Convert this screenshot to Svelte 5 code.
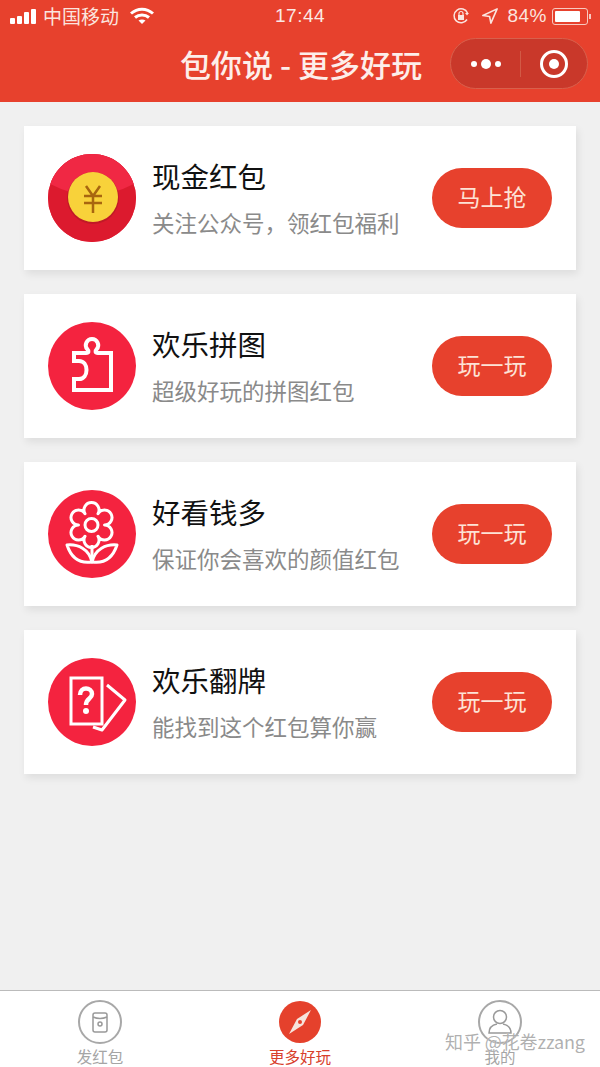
<script>
	const cards = [
		{ id: 'cash', title: '现金红包', sub: '关注公众号\uFF0C领红包福利', btn: '马上抢' },
		{ id: 'puzzle', title: '欢乐拼图', sub: '超级好玩的拼图红包', btn: '玩一玩' },
		{ id: 'flower', title: '好看钱多', sub: '保证你会喜欢的颜值红包', btn: '玩一玩' },
		{ id: 'cards', title: '欢乐翻牌', sub: '能找到这个红包算你赢', btn: '玩一玩' }
	];

	// scalloped outline of the flower, one arc per petal
	function flowerPath(cx, cy, r, lobe) {
		let d = '';
		for (let i = 0; i < 6; i++) {
			const a = ((i * 60 - 60) * Math.PI) / 180;
			const x = (cx + r * Math.cos(a)).toFixed(1);
			const y = (cy + r * Math.sin(a)).toFixed(1);
			d += i === 0 ? `M${x} ${y}` : `A${lobe} ${lobe} 0 1 1 ${x} ${y}`;
		}
		const a0 = (-60 * Math.PI) / 180;
		d += `A${lobe} ${lobe} 0 1 1 ${(cx + r * Math.cos(a0)).toFixed(1)} ${(cy + r * Math.sin(a0)).toFixed(1)}Z`;
		return d;
	}
</script>

<div class="page">
	<header class="head">
		<div class="status">
			<div class="status-left">
				<span class="signal"><i></i><i></i><i></i><i></i></span>
				<span class="carrier">中国移动</span>
				<svg class="wifi" viewBox="0 0 24 18" width="24" height="18">
					<path d="M1 6.500C7.500 .7 16.500 .7 23 6.500" fill="none" stroke="#fff" stroke-width="3" />
					<path d="M5 10.500C9 7 15 7 19 10.500" fill="none" stroke="#fff" stroke-width="3" />
					<path d="M8.500 13.500C10.500 12 13.500 12 15.500 13.500L12 17Z" fill="#fff" />
				</svg>
			</div>
			<span class="time">17:44</span>
			<div class="status-right">
				<svg viewBox="0 0 18 18" width="18" height="18">
					<path d="M15 12.500A7 7 0 1 1 15.500 6" fill="none" stroke="#fbe4df" stroke-width="1.500" />
					<path d="M13 6h4l-2 2.500z" fill="#fbe4df" />
					<rect x="6" y="8" width="6" height="5" fill="#fbe4df" />
					<path d="M7 8V6.500a2 2 0 0 1 4 0V8" fill="none" stroke="#fbe4df" stroke-width="1.200" />
				</svg>
				<svg class="loc" viewBox="0 0 18 18" width="16" height="16">
					<path d="M17 1L1 8.500l7.500 1L10 17z" fill="none" stroke="#fbe4df" stroke-width="1.800" stroke-linejoin="round" />
				</svg>
				<span class="pct">84%</span>
				<span class="battery"><span class="level"></span></span>
				<span class="nub"></span>
			</div>
		</div>
		<div class="nav">
			<h1>包你说 - 更多好玩</h1>
			<div class="capsule">
				<span class="dots"><i></i><b></b><i></i></span>
				<span class="sep"></span>
				<span class="target"></span>
			</div>
		</div>
	</header>

	<main class="list">
		{#each cards as card}
			<section class="card">
				<div class="icon" class:cash={card.id === 'cash'}>
					{#if card.id === 'cash'}
						<svg viewBox="0 0 88 88" width="88" height="88">
							<circle cx="44" cy="44" r="44" fill="#dc1a2e" />
							<path d="M2.300 30A44 44 0 0 1 85.700 30Q44 52 2.300 30Z" fill="#f02844" />
							<circle cx="45" cy="44" r="26" fill="#8f1a1a" opacity="0.35" />
							<circle cx="45" cy="43" r="25" fill="#f8d23a" />
							<path d="M38 32l7 10 7-10M36 42h18M36 49h18M45 42v17" fill="none" stroke="#a8660f" stroke-width="2.500" />
						</svg>
					{:else if card.id === 'puzzle'}
						<svg viewBox="0 0 88 88" width="88" height="88" fill="none" stroke="#fff" stroke-width="4">
							<path d="M26 31H38C41 31 41 29 39.500 27.500C35.500 23 39 17 44 17C49 17 52.500 23 48.500 27.500C47 29 47 31 50 31H63V68H26V57H31C41 57 41 39 31 39H26Z" />
						</svg>
					{:else if card.id === 'flower'}
						<svg viewBox="0 0 88 88" width="88" height="88" fill="none" stroke="#fff" stroke-width="3">
							<path d={flowerPath(43.5, 35, 13, 7.5)} stroke-linejoin="round" />
							<circle cx="43.500" cy="35" r="6.500" />
							<path d="M44 55V68" />
							<path d="M19 55C30 54 41 59 44 72C31 74 23 67 19 55Z" stroke-linejoin="round" />
							<path d="M69 55C58 54 47 59 44 72C57 74 65 67 69 55Z" stroke-linejoin="round" />
						</svg>
					{:else}
						<svg viewBox="0 0 88 88" width="88" height="88" fill="none" stroke="#fff" stroke-width="3">
							<rect x="23" y="20" width="31" height="46" />
							<path d="M32 37C32 28 44 29 44 36C44 41 38 40 38 47" stroke-width="4.500" />
							<circle cx="38" cy="53" r="3" fill="#fff" stroke="none" />
							<path d="M59 27L77 42L54 72L45 69" stroke-linejoin="round" />
						</svg>
					{/if}
				</div>
				<div class="text">
					<h2>{card.title}</h2>
					<p>{card.sub}</p>
				</div>
				<button type="button" class="play"><span>{card.btn}</span></button>
			</section>
		{/each}
	</main>

	<nav class="tabs">
		<div class="tab">
			<span class="ring">
				<svg viewBox="0 0 44 44" width="44" height="44" fill="none" stroke="#999" stroke-width="1.500">
					<rect x="15" y="13" width="14" height="19" rx="2" />
					<path d="M15 17Q22 20 29 17" />
					<circle cx="22" cy="24" r="2" />
				</svg>
			</span>
			<span class="tab-label">发红包</span>
		</div>
		<div class="tab active">
			<svg viewBox="0 0 44 44" width="44" height="44">
				<circle cx="22" cy="22" r="21" fill="#e5412c" />
				<path d="M33 10L25 25L11 34L19 19Z" fill="#f6e3dc" />
				<circle cx="22" cy="22" r="2" fill="#e5412c" />
			</svg>
			<span class="tab-label">更多好玩</span>
		</div>
		<div class="tab">
			<span class="ring">
				<svg viewBox="0 0 44 44" width="44" height="44" fill="none" stroke="#999" stroke-width="1.500">
					<circle cx="22" cy="17" r="6.500" />
					<path d="M19 24C14 25 11 28 11 33H33C33 28 30 25 25 24" />
				</svg>
			</span>
			<span class="tab-label">我的</span>
		</div>
	</nav>

	<div class="mark">知乎 @花卷zzang</div>
</div>

<style>
	:global(body) {
		margin: 0;
		background: #f0f0f0;
	}

	.page {
		position: relative;
		width: 600px;
		height: 1067px;
		overflow: hidden;
		display: flex;
		flex-direction: column;
		background: #f0f0f0;
		font-family: 'Noto Sans CJK SC', 'Liberation Sans', sans-serif;
	}

	.head {
		height: 102px;
		flex: none;
		background: #e7412d;
		color: #fff;
	}

	.status {
		height: 32px;
		padding: 0 9px 0 10px;
		display: flex;
		align-items: center;
		justify-content: space-between;
		position: relative;
	}

	.status-left,
	.status-right {
		display: flex;
		align-items: center;
	}

	.signal {
		display: flex;
		align-items: flex-end;
		gap: 2px;
		height: 15px;
		margin-right: 7px;
	}

	.signal i {
		width: 5px;
		background: #fff;
		border-radius: 1px;
	}

	.signal i:nth-child(1) { height: 6px; }
	.signal i:nth-child(2) { height: 8px; }
	.signal i:nth-child(3) { height: 12px; }
	.signal i:nth-child(4) { height: 15px; }

	.carrier {
		font-size: 19px;
		line-height: 32px;
		color: #fbe4df;
	}

	.wifi {
		margin-left: 11px;
	}

	.time {
		position: absolute;
		left: 275px;
		font-family: 'Liberation Sans', sans-serif;
		font-size: 19px;
		letter-spacing: 0.5px;
		color: #fbe9e5;
	}

	.loc {
		margin-left: 12px;
	}

	.pct {
		margin-left: 9px;
		font-family: 'Liberation Sans', sans-serif;
		font-size: 19px;
		letter-spacing: 0.5px;
		color: #fbe4df;
	}

	.battery {
		width: 36px;
		height: 17px;
		box-sizing: border-box;
		margin-left: 5px;
		border: 1px solid #f8c9c0;
		border-radius: 3px;
		padding: 2px;
		display: flex;
	}

	.level {
		width: 84%;
		background: #fff;
		border-radius: 1px;
	}

	.nub {
		width: 2px;
		height: 5px;
		margin-left: 1px;
		background: #f8c9c0;
	}

	.nav {
		height: 70px;
		padding-right: 12px;
		display: flex;
		align-items: center;
		justify-content: flex-end;
	}

	h1 {
		margin: -7px 28px 0 0;
		font-size: 31px;
		font-weight: 500;
		line-height: 70px;
		color: #fdeeea;
	}

	.capsule {
		width: 138px;
		height: 51px;
		box-sizing: border-box;
		margin-top: -7px;
		border: 1px solid #d8604c;
		border-radius: 25.5px;
		background: #c9382a;
		display: flex;
		align-items: center;
	}

	.dots {
		width: 69px;
		display: flex;
		align-items: center;
		justify-content: center;
		gap: 4px;
	}

	.dots i {
		width: 6px;
		height: 6px;
		border-radius: 50%;
		background: #fff;
	}

	.dots b {
		width: 10px;
		height: 10px;
		border-radius: 50%;
		background: #fff;
	}

	.sep {
		width: 1px;
		height: 26px;
		background: #d25a46;
	}

	.target {
		width: 28px;
		height: 28px;
		box-sizing: border-box;
		margin-left: 19px;
		border: 3px solid #fff;
		border-radius: 50%;
		position: relative;
	}

	.target::after {
		content: '';
		position: absolute;
		inset: 6px;
		border-radius: 50%;
		background: #fff;
	}

	.list {
		flex: 1;
		padding: 24px;
		display: flex;
		flex-direction: column;
		gap: 24px;
	}

	.card {
		height: 144px;
		padding: 0 24px;
		display: flex;
		align-items: center;
		background: #fff;
		box-shadow: 2px 4px 8px rgba(0, 0, 0, 0.08);
	}

	.icon {
		width: 88px;
		height: 88px;
		flex: none;
		border-radius: 50%;
		background: #f4233f;
	}

	.icon svg {
		display: block;
	}

	.text {
		flex: 1;
		margin-left: 16px;
		min-width: 0;
		padding-bottom: 4px;
	}

	h2 {
		margin: 0;
		font-size: 28.5px;
		font-weight: 400;
		line-height: 42px;
		color: #111;
	}

	p {
		margin: 9px 0 0;
		font-size: 22.5px;
		line-height: 32px;
		color: #8a8a8a;
		white-space: nowrap;
	}

	.play {
		width: 120px;
		height: 60px;
		flex: none;
		padding: 0 0 4px;
		border: none;
		border-radius: 30px;
		background: #e7412d;
		color: #fde3d6;
		font-family: inherit;
		font-size: 23px;
	}

	.tabs {
		height: 76px;
		flex: none;
		display: flex;
		border-top: 1px solid #bbb;
		background: #fff;
	}

	.tab {
		flex: 1;
		padding-top: 9px;
		display: flex;
		flex-direction: column;
		align-items: center;
	}

	.ring {
		width: 44px;
		height: 44px;
		box-sizing: border-box;
		border: 2px solid #a8a8a8;
		border-radius: 50%;
		display: block;
	}

	.ring svg {
		display: block;
		margin: -2px;
	}

	.tab-label {
		margin-top: 2px;
		font-size: 15.5px;
		line-height: 20px;
		color: #a5a5a5;
	}

	.tab.active .tab-label {
		color: #d8402c;
	}

	.mark {
		position: absolute;
		left: 445px;
		top: 1028px;
		font-family: 'Noto Sans CJK SC', sans-serif;
		font-size: 18px;
		line-height: 26px;
		letter-spacing: -0.1px;
		color: rgba(150, 150, 150, 0.75);
		text-shadow: 0 0 1px #fff;
		white-space: nowrap;
	}
</style>
